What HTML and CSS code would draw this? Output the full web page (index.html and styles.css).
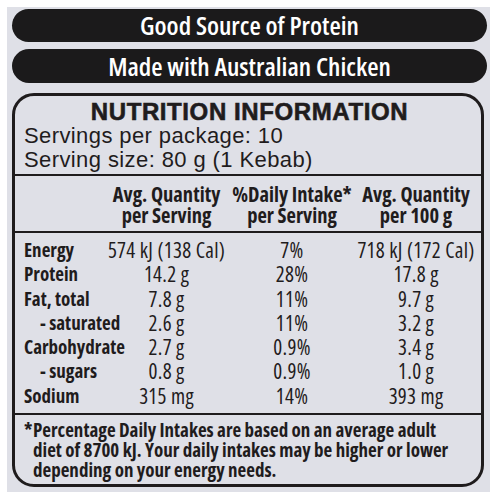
FILE: index.html
```html
<!DOCTYPE html>
<html lang="en">
  <head>
    <meta charset="UTF-8" />
    <meta name="viewport" content="width=device-width, initial-scale=1.0" />
    <title>Nutrition Information</title>
    <link rel="stylesheet" href="styles.css">
  </head>
  <body>
    <div class="panel">
      <div class="pill">Good Source of Protein</div>
      <div class="pill">Made with Australian Chicken</div>

      <div class="nip">
        <div class="nip-head">
          <h1>NUTRITION INFORMATION</h1>
          <p>Servings per package: 10</p>
          <p>Serving size: 80 g (1 Kebab)</p>
        </div>

        <div class="grid cols">
          <div></div>
          <div>Avg. Quantity<br />per Serving</div>
          <div>%Daily Intake*<br />per Serving</div>
          <div>Avg. Quantity<br />per 100 g</div>
        </div>

        <div class="grid rows">
          <div class="name">Energy</div>
          <div>574 kJ (138 Cal)</div>
          <div>7%</div>
          <div>718 kJ (172 Cal)</div>

          <div class="name">Protein</div>
          <div>14.2 g</div>
          <div>28%</div>
          <div>17.8 g</div>

          <div class="name">Fat, total</div>
          <div>7.8 g</div>
          <div>11%</div>
          <div>9.7 g</div>

          <div class="name sub">- saturated</div>
          <div>2.6 g</div>
          <div>11%</div>
          <div>3.2 g</div>

          <div class="name">Carbohydrate</div>
          <div>2.7 g</div>
          <div>0.9%</div>
          <div>3.4 g</div>

          <div class="name sub">- sugars</div>
          <div>0.8 g</div>
          <div>0.9%</div>
          <div>1.0 g</div>

          <div class="name">Sodium</div>
          <div>315 mg</div>
          <div>14%</div>
          <div>393 mg</div>
        </div>

        <div class="note">
          <span class="star">*</span>
          <span>Percentage Daily Intakes are based on an average adult<br />diet of 8700 kJ. Your daily intakes may be higher or lower<br />depending on your energy needs.</span>
        </div>
      </div>
    </div>
  </body>
</html>
```

FILE: styles.css
```css
body {
  margin: 0;
  background-color: #fff;
  color: #1f1c1d;
  font-family: 'Liberation Sans', Arial, sans-serif;
}
.panel {
  margin: 7px 0 0 7px;
  width: 483px;
  height: 485px;
  box-sizing: border-box;
  padding: 2px 3px 0 5px;
  background-color: #dfe0e7;
}
.pill {
  height: 33px;
  margin-bottom: 7px;
  border-radius: 17px;
  background-color: #1b1a1b;
  color: #fff;
  text-align: center;
  font-family: 'Open Sans', sans-serif;
  font-stretch: 75%;
  font-weight: 600;
  font-size: 26px;
  line-height: 33px;
}
.pill + .pill {
  height: 34px;
  line-height: 34px;
  margin-bottom: 10px;
}
.nip {
  margin-right: 3px;
  border: 3px solid #1f1c1d;
  border-radius: 22px;
}
.nip-head {
  padding: 4px 0 2px 9px;
  border-bottom: 2px solid #1f1c1d;
}
h1 {
  margin: 0;
  text-align: center;
  font-size: 24px;
  line-height: 24px;
  letter-spacing: 0.6px;
  font-weight: bold;
  -webkit-text-stroke: 0.6px #1f1c1d;
  padding-right: 6px;
}
.nip-head p {
  margin: 0;
  font-size: 22px;
  line-height: 24px;
  letter-spacing: 0.4px;
}
.grid {
  display: grid;
  grid-template-columns: 81px 123px 128px 120px;
  padding: 0 5px 0 9px;
  font-family: 'Open Sans', sans-serif;
  font-stretch: 75%;
  border-bottom: 2px solid #1f1c1d;
}
.grid > div {
  text-align: center;
  white-space: nowrap;
}
.cols {
  padding-top: 8px;
  padding-bottom: 5px;
  font-weight: bold;
  font-size: 20.5px;
  line-height: 21px;
}
.rows {
  padding-top: 5px;
  padding-bottom: 5px;
  font-size: 21px;
  letter-spacing: 0.3px;
  line-height: 24.3px;
}
.rows .name {
  text-align: left;
  font-weight: bold;
  font-size: 19px;
  letter-spacing: 0;
}
.rows .sub {
  padding-left: 16px;
}
.note {
  display: flex;
  padding: 5px 8px 4px 9px;
  font-family: 'Open Sans', sans-serif;
  font-stretch: 75%;
  font-weight: bold;
  font-size: 19px;
  line-height: 20px;
  white-space: nowrap;
}
.star {
  width: 9px;
  flex: none;
}
```
